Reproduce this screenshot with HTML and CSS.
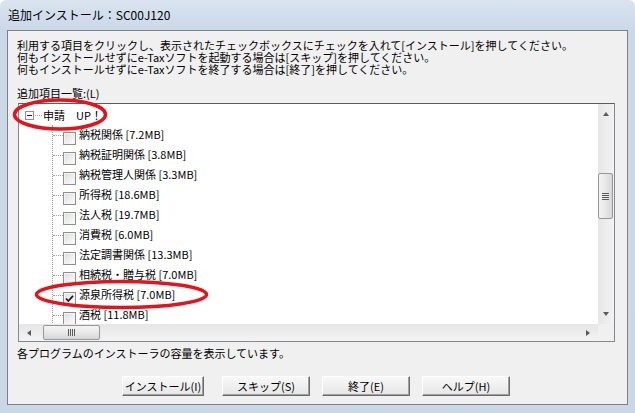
FILE: index.html
```html
<!DOCTYPE html>
<html lang="ja">
<head>
<meta charset="utf-8">
<link rel="stylesheet" href="styles.css">
</head>
<body>
<div class="window">
  <div class="titlebar">追加インストール：SC00J120</div>
  <div class="client">
    <div class="intro">
      <div>利用する項目をクリックし、表示されたチェックボックスにチェックを入れて[インストール]を押してください。</div>
      <div>何もインストールせずにe-Taxソフトを起動する場合は[スキップ]を押してください。</div>
      <div>何もインストールせずにe-Taxソフトを終了する場合は[終了]を押してください。</div>
    </div>
    <div class="label">追加項目一覧:(L)</div>
    <div class="tree">
      <div class="tree-body">
        <div class="root-row">
          <span class="expander"><span class="minus"></span></span>
          <span class="root-branch"></span>
          <span class="root-text">申請　UP！</span>
        </div>
        <div class="children">
          <div class="row"><span class="branch"></span><span class="cb"></span><span class="item">納税関係 [7.2MB]</span></div>
          <div class="row"><span class="branch"></span><span class="cb"></span><span class="item">納税証明関係 [3.8MB]</span></div>
          <div class="row"><span class="branch"></span><span class="cb"></span><span class="item">納税管理人関係 [3.3MB]</span></div>
          <div class="row"><span class="branch"></span><span class="cb"></span><span class="item">所得税 [18.6MB]</span></div>
          <div class="row"><span class="branch"></span><span class="cb"></span><span class="item">法人税 [19.7MB]</span></div>
          <div class="row"><span class="branch"></span><span class="cb"></span><span class="item">消費税 [6.0MB]</span></div>
          <div class="row"><span class="branch"></span><span class="cb"></span><span class="item">法定調書関係 [13.3MB]</span></div>
          <div class="row"><span class="branch"></span><span class="cb"></span><span class="item">相続税・贈与税 [7.0MB]</span></div>
          <div class="row"><span class="branch"></span><span class="cb checked"><svg viewBox="0 0 13 13" width="13" height="13"><path d="M3 6.5 L5.3 9 L10 3.8" fill="none" stroke="#1a1a1a" stroke-width="1.8"/></svg></span><span class="item">源泉所得税 [7.0MB]</span></div>
          <div class="row"><span class="branch"></span><span class="cb"></span><span class="item">酒税 [11.8MB]</span></div>
        </div>
      </div>
      <div class="vscroll">
        <span class="arrow up"></span>
        <div class="vtrack"><div class="vthumb"><span class="grip-h"></span></div></div>
        <span class="arrow down"></span>
      </div>
      <div class="hscroll">
        <span class="arrow left"></span>
        <div class="htrack"><div class="hthumb"><span class="grip-v"></span></div></div>
        <span class="arrow right"></span>
      </div>
      <div class="corner"></div>
    </div>
    <div class="status">各プログラムのインストーラの容量を表示しています。</div>
    <div class="buttons">
      <button class="btn first">インストール(I)</button>
      <button class="btn">スキップ(S)</button>
      <button class="btn">終了(E)</button>
      <button class="btn">ヘルプ(H)</button>
    </div>
  </div>
</div>
<svg class="marks" width="635" height="413" viewBox="0 0 635 413">
  <ellipse cx="60" cy="114.5" rx="45.5" ry="14.5" fill="none" stroke="#e3141c" stroke-width="3.5"/>
  <ellipse cx="121.5" cy="294.5" rx="85" ry="13" fill="none" stroke="#e3141c" stroke-width="3.5"/>
</svg>
</body>
</html>
```

FILE: styles.css
```css
html, body {
  margin: 0;
  padding: 0;
  width: 635px;
  height: 413px;
  overflow: hidden;
  background: #ffffff;
}
body {
  position: relative;
  font-family: "Noto Sans CJK JP", "Noto Sans", sans-serif;
  font-size: 11px;
  color: #000;
}
.window {
  width: 635px;
  height: 413px;
  box-sizing: border-box;
  padding: 0 7px 8px 7px;
  background: linear-gradient(to bottom, #dae4f0 0px, #cbd8e8 30px, #c9d7e7 100%);
  border-radius: 6px 6px 0 0;
  display: flex;
  flex-direction: column;
}
.titlebar {
  height: 30px;
  line-height: 30px;
  padding-left: 1px;
  font-size: 12px;
  white-space: nowrap;
}
.client {
  flex: 1;
  border: 1px solid #7c7f84;
  background: #f0f0f0;
  padding: 8px 0 0 9px;
  box-sizing: border-box;
  display: flex;
  flex-direction: column;
}
.intro {
  line-height: 12px;
  white-space: nowrap;
}
.label {
  margin-top: 12px;
  line-height: 12px;
  white-space: nowrap;
}
.tree {
  margin-top: 4px;
  margin-left: 1px;
  width: 597px;
  height: 239px;
  box-sizing: border-box;
  border: 1px solid #828790;
  border-top-color: #5a5d62;
  background: #ffffff;
  display: grid;
  grid-template-columns: 1fr 16px;
  grid-template-rows: 1fr 17px;
}
.tree-body {
  overflow: hidden;
  padding-top: 1px;
}
.root-row {
  height: 20px;
  display: flex;
  align-items: center;
  padding-left: 6px;
}
.expander {
  width: 9px;
  height: 9px;
  box-sizing: border-box;
  border: 1px solid #8f8f8f;
  background: #fff;
  display: flex;
  align-items: center;
  justify-content: center;
}
.minus {
  width: 5px;
  height: 1px;
  background: #1e1e1e;
}
.root-branch {
  width: 7px;
  border-top: 1px dotted #a0a0a0;
  margin: 0 1px 0 1px;
}
.root-text {
  line-height: 20px;
  white-space: nowrap;
}
.children {
  margin-left: 33px;
  border-left: 1px dotted #a0a0a0;
  height: 240px;
}
.row {
  height: 20px;
  display: flex;
  align-items: flex-start;
}
.branch {
  width: 10px;
  margin-top: 10px;
  border-top: 1px dotted #a0a0a0;
}
.cb {
  width: 13px;
  height: 13px;
  margin-top: 7px;
  box-sizing: border-box;
  border: 1px solid #8e8f8f;
  background: linear-gradient(135deg, #dcdcdc, #fefefe);
  box-shadow: inset 0 0 0 1px #f4f4f4;
  display: flex;
}
.cb svg {
  margin: -1px;
}
.item {
  margin-left: 3px;
  line-height: 18px;
  white-space: nowrap;
}
.vscroll {
  grid-column: 2;
  grid-row: 1;
  background: linear-gradient(to right, #e6e6e6, #f3f3f3);
  display: flex;
  flex-direction: column;
  align-items: center;
}
.vtrack {
  flex: 1;
  width: 100%;
  position: relative;
}
.vthumb {
  position: absolute;
  left: 0;
  top: 50px;
  width: 15px;
  height: 46px;
  box-sizing: border-box;
  border: 1px solid #979797;
  border-radius: 2px;
  background: linear-gradient(to right, #f4f4f4, #e8e8e8 50%, #d6d6d6);
  display: flex;
  align-items: center;
  justify-content: center;
}
.grip-h {
  width: 7px;
  height: 7px;
  background: repeating-linear-gradient(to bottom, #5c5c5c 0 1px, #e8e8e8 1px 2px);
}
.hscroll {
  grid-column: 1;
  grid-row: 2;
  background: linear-gradient(to bottom, #e6e6e6, #f3f3f3);
  display: flex;
  align-items: center;
}
.htrack {
  flex: 1;
  height: 100%;
  position: relative;
}
.hthumb {
  position: absolute;
  top: 1px;
  left: 4px;
  width: 57px;
  height: 15px;
  box-sizing: border-box;
  border: 1px solid #979797;
  border-radius: 2px;
  background: linear-gradient(to bottom, #f4f4f4, #e8e8e8 50%, #d6d6d6);
  display: flex;
  align-items: center;
  justify-content: center;
}
.grip-v {
  width: 7px;
  height: 7px;
  background: repeating-linear-gradient(to right, #5c5c5c 0 1px, #e8e8e8 1px 2px);
}
.corner {
  grid-column: 2;
  grid-row: 2;
  background: #f0f0f0;
}
.arrow {
  width: 0;
  height: 0;
  flex: none;
}
.arrow.up {
  margin: 8px 0 7px;
  border-left: 3.5px solid transparent;
  border-right: 3.5px solid transparent;
  border-bottom: 4px solid #5a5a5a;
}
.arrow.down {
  margin: 7px 0 8px;
  border-left: 3.5px solid transparent;
  border-right: 3.5px solid transparent;
  border-top: 4px solid #5a5a5a;
}
.arrow.left {
  margin: 0 8px 0 8px;
  border-top: 3.5px solid transparent;
  border-bottom: 3.5px solid transparent;
  border-right: 4px solid #5a5a5a;
}
.arrow.right {
  margin: 0 8px 0 8px;
  border-top: 3.5px solid transparent;
  border-bottom: 3.5px solid transparent;
  border-left: 4px solid #5a5a5a;
}
.status {
  margin-top: 5px;
  line-height: 12px;
  white-space: nowrap;
}
.buttons {
  margin-top: 17px;
  padding-left: 105px;
  display: flex;
  gap: 12px;
}
.btn {
  width: 88px;
  height: 20px;
  padding: 0;
  box-sizing: border-box;
  font-family: "Noto Sans CJK JP", "Noto Sans", sans-serif;
  font-size: 11px;
  color: #000;
  border: 1px solid;
  border-color: #ffffff #6b6b6b #6b6b6b #ffffff;
  box-shadow: inset -1px -1px 0 #a0a0a0;
  background: linear-gradient(to bottom, #f8f8f8, #e6e6e6);
  border-radius: 0;
}
.btn.first {
  width: 82px;
  margin-right: 6px;
}
.marks {
  position: absolute;
  left: 0;
  top: 0;
  pointer-events: none;
}
```
